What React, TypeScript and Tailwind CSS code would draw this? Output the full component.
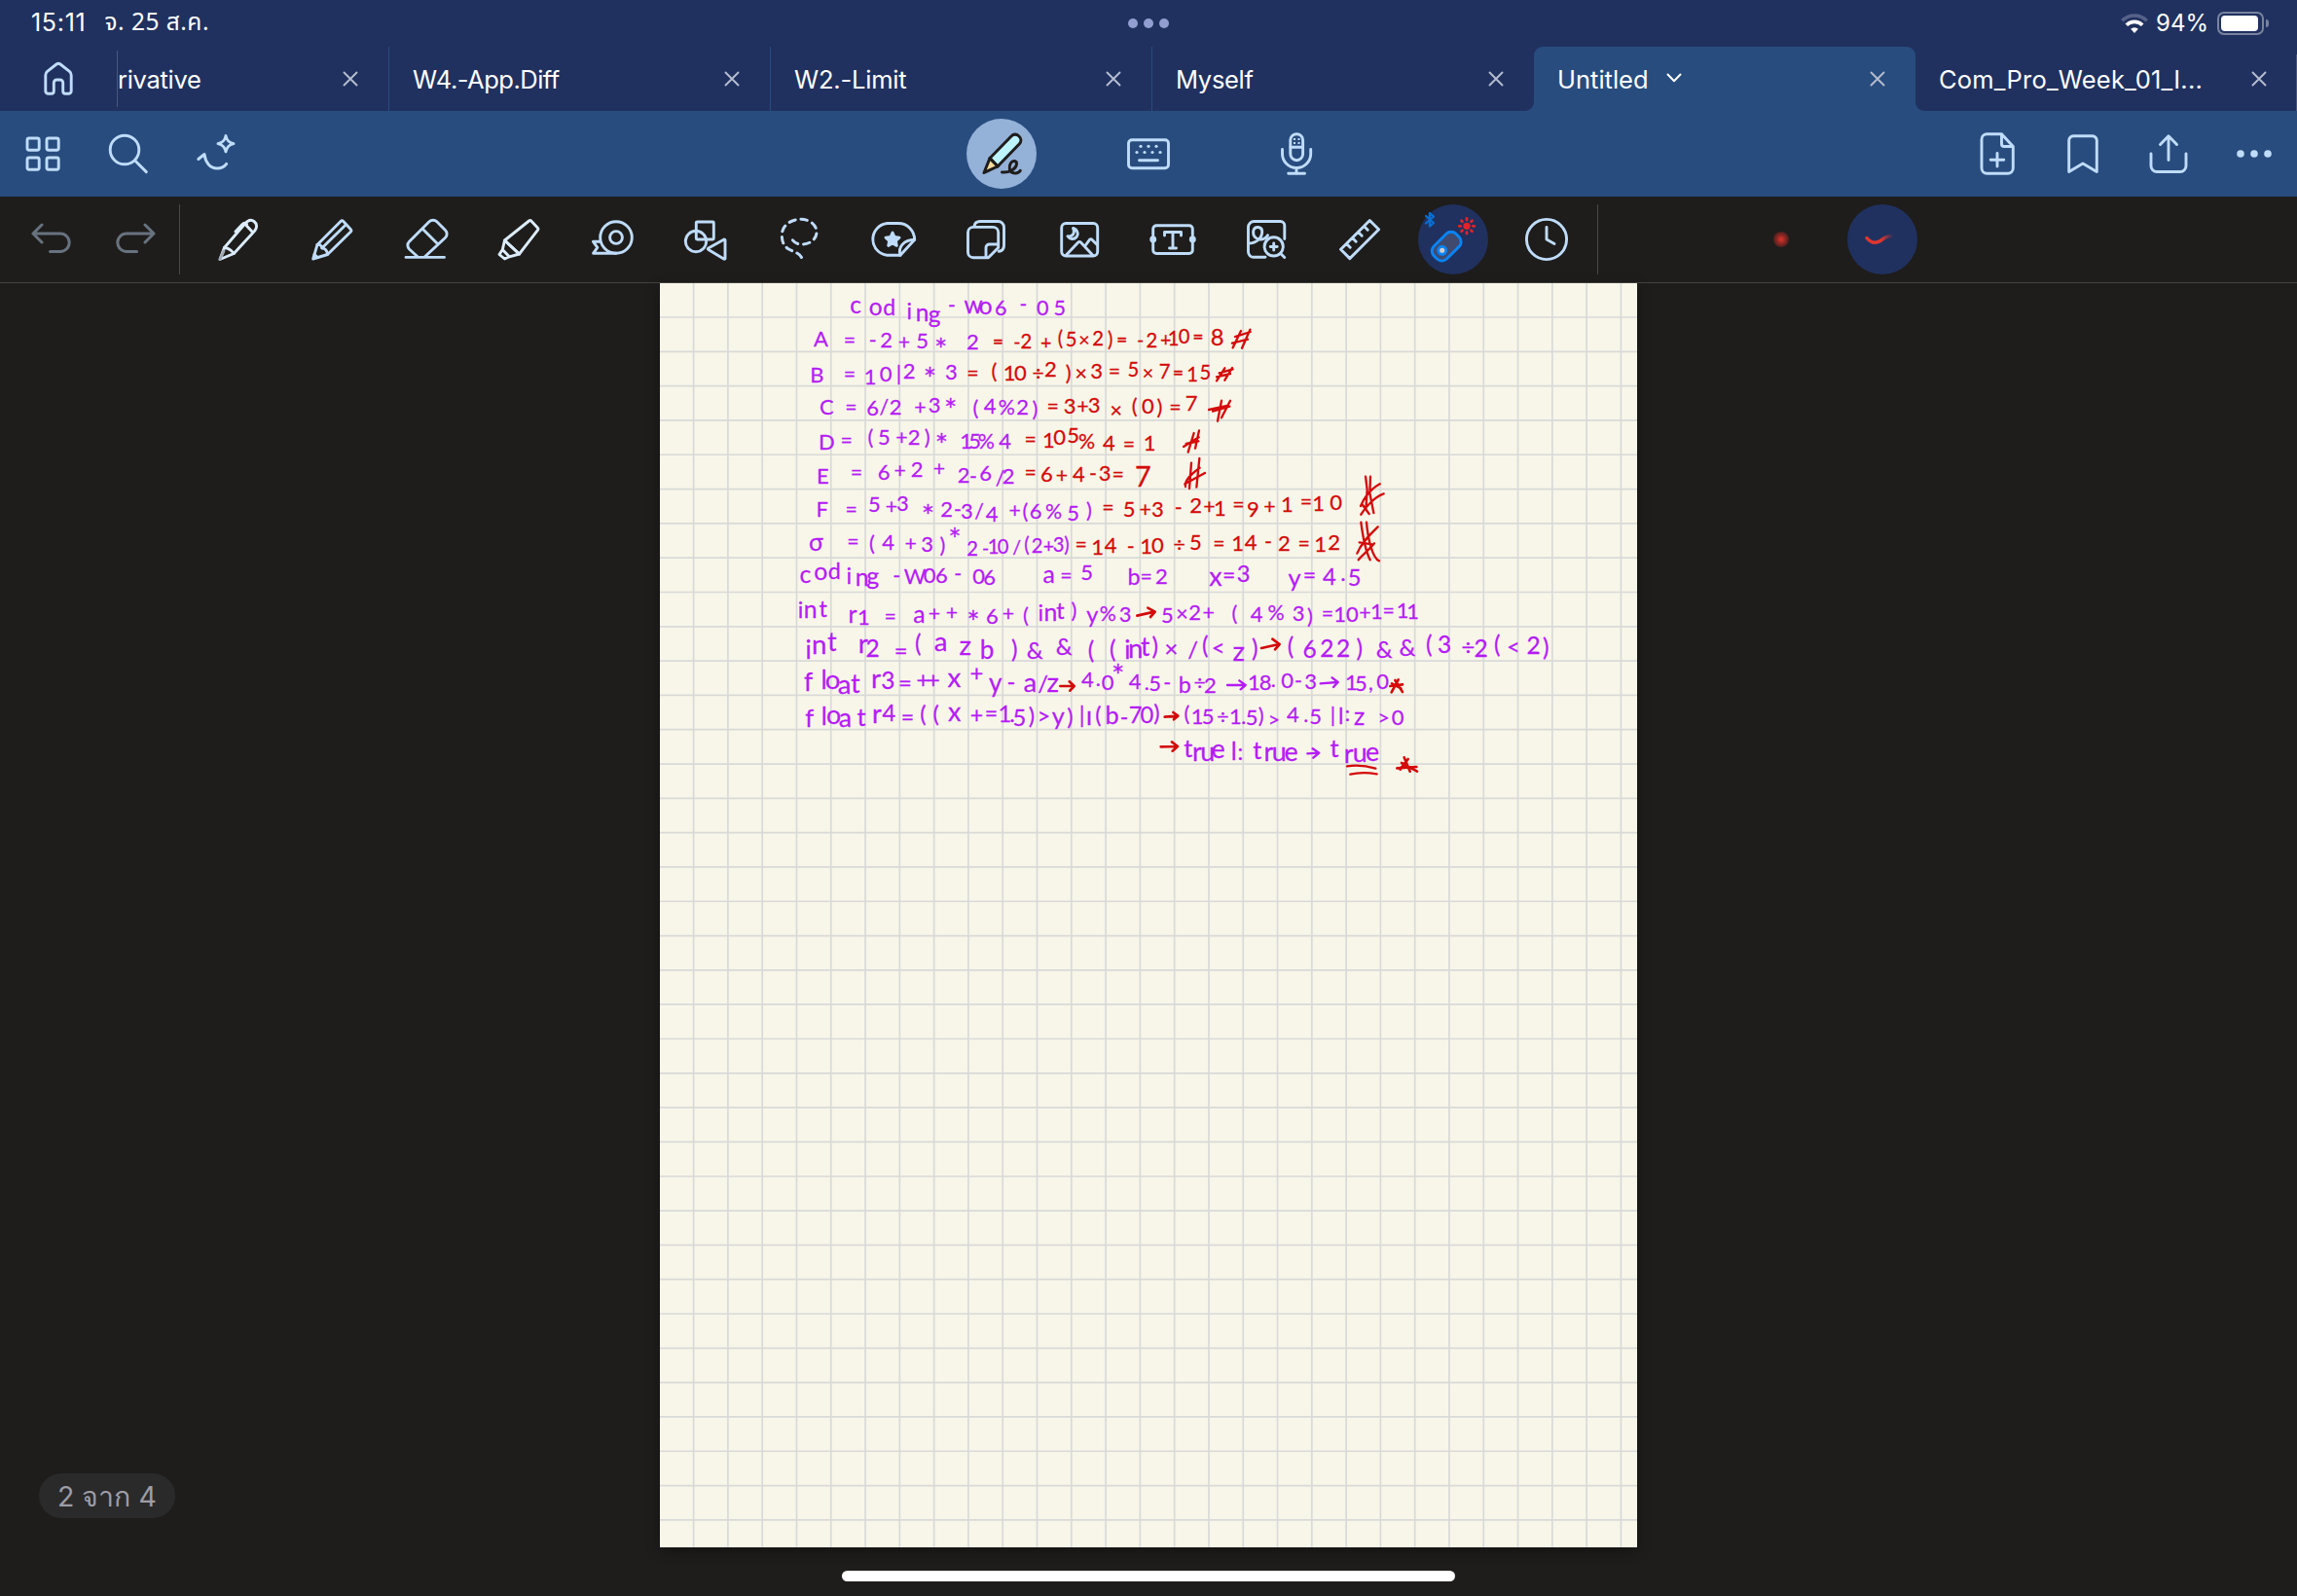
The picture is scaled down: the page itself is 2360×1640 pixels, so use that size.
import React from 'react';

const PURPLE = '#b51cf5';
const RED = '#d40a0a';

/* ---------- icons ---------- */

function Icon({
  children,
  color = '#bfdcfa',
  width = 2.9,
  className = '',
}: {
  children: React.ReactNode;
  color?: string;
  width?: number;
  className?: string;
}) {
  return (
    <svg
      viewBox="0 0 48 48"
      className={`size-12 shrink-0 overflow-visible ${className}`}
      fill="none"
      stroke={color}
      strokeWidth={width}
      strokeLinecap="round"
      strokeLinejoin="round"
    >
      {children}
    </svg>
  );
}

const GridIcon = () => (
  <Icon>
    <rect x="8" y="8" width="12.2" height="12.2" rx="2" />
    <rect x="28" y="8" width="12.2" height="12.2" rx="2" />
    <rect x="8" y="28" width="12.2" height="12.2" rx="2" />
    <rect x="28" y="28" width="12.2" height="12.2" rx="2" />
  </Icon>
);
const SearchIcon = () => (
  <Icon>
    <circle cx="20" cy="20" r="14.8" />
    <path d="M30.7 31 42.3 42.6" />
  </Icon>
);
const SparkleIcon = () => (
  <Icon>
    <path d="M36 5.5c1 5 3 7 8 8.2-5 1.2-7 3.2-8 8.2-1-5-3-7-8-8.2 5-1.2 7-3.2 8-8.2z" />
    <path d="M7.800 29.500 14 24.500c1 8 5.500 14.500 13 14.500 4 0 7.500-1.700 9.700-4.700" />
  </Icon>
);
const WriteIcon = () => (
  <Icon color="#1e1d1b" width={3}>
    <path d="M12 28.500 34 6c2.500-2.500 5.500-2.300 8 0s2.500 5.500.2 8L20 37z" fill="#bdf3ff" />
    <path d="M12 28.500 6 43.500 20 37z" fill="#f5dc9a" />
    <path d="M24.500 43c7.500.8 14.500-3.500 15-8.500.3-3.500-4-4-6-1-2.500 4-1.500 9.500 3 10.300 3 .4 5.500-.3 6.800-2.500" />
  </Icon>
);
const KeyboardIcon = () => (
  <Icon>
    <rect x="3.500" y="9.700" width="41" height="29" rx="3.500" />
    <path d="M14.500 30.700h19" />
    <g fill="#bfdcfa" stroke="none">
      <circle cx="16" cy="16.300" r="1.600" />
      <circle cx="24" cy="16.300" r="1.600" />
      <circle cx="32" cy="16.300" r="1.600" />
      <circle cx="12" cy="22.500" r="1.600" />
      <circle cx="20" cy="22.500" r="1.600" />
      <circle cx="28" cy="22.500" r="1.600" />
      <circle cx="36" cy="22.500" r="1.600" />
    </g>
  </Icon>
);
const MicIcon = () => (
  <Icon>
    <rect x="17.800" y="3.700" width="12.800" height="27" rx="6.400" />
    <path d="M18 17.300h12.500" />
    <path d="M9.500 19.500V24a14.600 14.600 0 0 0 29.200 0v-4.500M24 38.500v6M15.700 44.300h16.800" />
    <g fill="#bfdcfa" stroke="none">
      <rect x="21" y="8" width="2" height="2" />
      <rect x="25.500" y="8" width="2" height="2" />
      <rect x="21" y="12" width="2" height="2" />
      <rect x="25.500" y="12" width="2" height="2" />
    </g>
  </Icon>
);
const NewPageIcon = () => (
  <Icon>
    <path d="M28.500 3.700H13.500a5.500 5.500 0 0 0-5.500 5.500v29.600a5.500 5.500 0 0 0 5.500 5.500h21.300a5.500 5.500 0 0 0 5.500-5.500V16.500zM28.500 3.700v10.300a2.500 2.500 0 0 0 2.500 2.500h9.300M24 23.500v13.600M17.200 30.300h13.600" />
  </Icon>
);
const BookmarkIcon = () => (
  <Icon>
    <path d="M9.700 42.500V10.300a4.500 4.500 0 0 1 4.500-4.500h19.600a4.500 4.500 0 0 1 4.500 4.500v32.200L24 34z" />
  </Icon>
);
const ShareIcon = () => (
  <Icon>
    <path d="M6 24v12.500a6 6 0 0 0 6 6h24a6 6 0 0 0 6-6V24M24 30.500V6M15.500 14.500 24 5.800l8.500 8.700" />
  </Icon>
);
const MoreIcon = () => (
  <Icon color="none">
    <g fill="#bfdcfa">
      <circle cx="10" cy="24" r="3.800" />
      <circle cx="24" cy="24" r="3.800" />
      <circle cx="38" cy="24" r="3.800" />
    </g>
  </Icon>
);
const HomeIcon = () => (
  <Icon className="-m-0.5">
    <path d="M10.800 36.500V20.200c0-1.500.6-2.800 1.800-3.800L22 9c1.300-1 2.700-1 4 0l9.400 7.400c1.200 1 1.800 2.300 1.800 3.800v16.300a2.800 2.800 0 0 1-2.800 2.800h-3.200a2.500 2.500 0 0 1-2.500-2.500v-8.800a3 3 0 0 0-3-3h-3.400a3 3 0 0 0-3 3v8.800a2.500 2.500 0 0 1-2.500 2.500h-3.200a2.800 2.800 0 0 1-2.800-2.800z" />
  </Icon>
);
const UndoIcon = () => (
  <Icon color="#68727f" width={3}>
    <path d="M6 18h28a9.200 9.200 0 0 1 0 18.400H23.500M15 9 6 18l9 9" />
  </Icon>
);
const RedoIcon = () => (
  <Icon color="#68727f" width={3}>
    <path d="M42 18H14a9.200 9.200 0 0 0 0 18.400h10.500M33 9l9 9-9 9" />
  </Icon>
);
const PenIcon = () => (
  <Icon color="#dcecfc">
    <path d="M9.500 32.500 31 7.500c3-3.400 6-4.300 9-2s3.500 6 .8 9.500L19.300 38.500 5 44.500z" />
    <path d="M9.500 32.500c4 .5 7.800 3 9.800 6M31 8.500l7.500 8M21 16l7-7.500c1.500-1.600 3-1.500 4.500-.2" />
    <path d="m5 44.500 4-8.500" stroke="#9fa8b3" />
  </Icon>
);
const PencilIcon = () => (
  <Icon>
    <path d="M9 29.500 33 5.500a2 2 0 0 1 2.800 0l7.400 8a2 2 0 0 1 0 2.800L19.500 39.500 4.700 44z" />
    <path d="M9 29.500c1.500-.8 4.500.5 4.700 3.500 3 0 5.800 2.500 5.800 6.500M13.700 33l24-23.500M9.500 42.500 6 39.500" />
  </Icon>
);
const EraserIcon = () => (
  <Icon>
    <path d="M4 42.400h39.500M16 41.800 7.500 34a5.500 5.500 0 0 1 0-7.800L28 5.800a5.500 5.500 0 0 1 7.800 0l8.700 8.700a5.500 5.500 0 0 1 0 7.800L23.500 41.800M21.500 13.500 37 29" />
  </Icon>
);
const HighlighterIcon = () => (
  <Icon color="#dcecfc">
    <path d="M9.500 25 34.500 5a1.800 1.800 0 0 1 2.500.2l6.300 6.800a1.800 1.800 0 0 1 .2 2.300L24.500 39z" />
    <path d="M9.500 25 7.300 34.500l7 7.300L24.500 39zM7.300 34.500 4 39.500l5.500 4.500 4.800-2.200" />
  </Icon>
);
const TapeIcon = () => (
  <Icon>
    <circle cx="28" cy="22" r="16.300" />
    <circle cx="28" cy="22" r="6.400" />
    <path d="M28 38.300H4.500l4.300-6-4.300-6H11.500" />
  </Icon>
);
const ShapesIcon = () => (
  <Icon>
    <rect x="14.300" y="6" width="18" height="18" rx="1" />
    <circle cx="14" cy="26" r="10.700" />
    <path d="M26.800 33 43 24a.8.8 0 0 1 1 .7v18.800a.8.8 0 0 1-1 .7L26.800 34.500a.8.8 0 0 1 0-1.500z" />
  </Icon>
);
const LassoIcon = () => (
  <Icon width={3}>
    <path
      d="M17.500 24.800C20 28 23 29 27 29c8 0 15-5 15-12.500S35 3.300 25.500 3.300 6.300 9.500 6.300 19.500C6.300 26 8 30 12.500 33.500c5.500 3.300 13.500 4.500 14.800 11.300"
      strokeDasharray="6.500 5.700"
    />
  </Icon>
);
const StickerIcon = () => (
  <Icon>
    <path d="M32 40.300H18.500A16.500 16.500 0 0 1 18.500 7.500h11.500c9.500 0 16.500 7.500 16.700 16.800z" />
    <path d="M32 40.300c-2.500-8 3-15.800 14.700-16" />
    <path d="m24 17 2.100 4.500 4.900.6-3.600 3.400.9 4.900-4.300-2.400-4.300 2.400.9-4.900-3.600-3.400 4.900-.6z" fill="#bfdcfa" />
  </Icon>
);
const PagesIcon = () => (
  <Icon>
    <path d="M26.500 42.700h-15.500a5.500 5.500 0 0 1-5.500-5.500v-20.300a5.500 5.500 0 0 1 5.500-5.500h20.200a5.500 5.500 0 0 1 5.500 5.500v15.500z" />
    <path d="M24 42.500V32.500a3.500 3.500 0 0 1 3.500-3.500h9" />
    <path d="M12 10.500c.5-3.500 2.500-5 6-5h18.500a6 6 0 0 1 6 6v18.500c0 4-1.500 6-5.300 6.300" />
  </Icon>
);
const ImageIcon = () => (
  <Icon>
    <rect x="5.700" y="7.500" width="37" height="33.500" rx="4.500" />
    <path d="M17.500 12.500c4.500 1.500 6 6 3.500 9s-7 2.500-9-.7c5 .7 7.800-3 5.500-8.300zM10.500 40 22.800 27a1.800 1.800 0 0 1 2.600 0L37.500 40M30 30.500l4.600-6.300a1.500 1.500 0 0 1 2.300 0l5.300 5.300" />
  </Icon>
);
const TextBoxIcon = () => (
  <Icon>
    <rect x="3.700" y="9.700" width="40.600" height="28.800" rx="3.500" />
    <path d="M15.500 20v-3.500h17V20M24 16.500v16.500M20.500 33h7" />
    <circle cx="3.700" cy="24" r="2" fill="#bfdcfa" />
    <circle cx="44.300" cy="24" r="2" fill="#bfdcfa" />
  </Icon>
);
const SketchZoomIcon = () => (
  <Icon>
    <path d="M42.800 23.500V9.800a4.300 4.300 0 0 0-4.300-4.300H11.500a6 6 0 0 0-6 6v25.300a5.500 5.500 0 0 0 5.500 5.500h12" />
    <path d="M5.500 28c9 0 14.500-6 14.200-12.500-.3-5-8-5.500-9 0-.8 5.500 3.500 9 8 8.500 3.500-.3 5.500-2 6.800-4.300" />
    <circle cx="31.700" cy="31.400" r="9.600" />
    <path d="m38.700 38.500 4 4M31.700 28v7M28.200 31.500h7" />
  </Icon>
);
const RulerIcon = () => (
  <Icon>
    <path d="M34.300 4.500 43.600 13.800 13.800 43.600 4.500 34.300zM10.500 28.500l3.700 3.700M16.500 22.500l3.700 3.700M22.500 16.500l3.700 3.700M28.500 10.500l3.700 3.700" />
  </Icon>
);
const LaserIcon = () => (
  <Icon>
    <g transform="rotate(-45 17 31)">
      <rect x="1" y="22" width="32" height="18.500" rx="7" fill="#3f4a6e" stroke="#0a84f5" />
    </g>
    <circle cx="12.700" cy="35.300" r="4" fill="#d0cfcf" stroke="#0a84f5" />
    <path d="M-4 0 4 7 0 10.500V-3L4 .5-4 7.500" stroke="#0b6fd0" strokeWidth="2.300" />
    <circle cx="38" cy="10.300" r="3.600" fill="#e0242a" stroke="none" />
    <g stroke="#e0242a" strokeWidth="2.800">
      <path d="M38 2.500v1.500M38 16.600v1.500M30.200 10.300h1.500M44.300 10.300h1.500M32.500 4.800l1 1M42.500 14.800l1 1M43.500 4.800l-1 1M33.500 14.800l-1 1" />
    </g>
  </Icon>
);
const ClockIcon = () => (
  <Icon>
    <circle cx="24" cy="24" r="20.600" />
    <path d="M24 11.500V24l8 4.500" />
  </Icon>
);
const CloseIcon = () => (
  <svg viewBox="0 0 16 16" className="size-4 shrink-0" stroke="#b5bdd0" strokeWidth="1.900" strokeLinecap="round">
    <path d="M1.500 1.500 14.500 14.500M14.500 1.500 1.500 14.500" />
  </svg>
);

/* ---------- tabs ---------- */

function Tab({ title, last = false, spacing = 'tracking-[-0.3px]' }: { title: string; last?: boolean; spacing?: string }) {
  return (
    <div
      className={`flex h-[66px] w-[392px] shrink-0 items-center justify-between pr-[31px] pl-6 ${
        last ? '' : 'border-r-[1.500px] border-[#284c7e]'
      }`}
    >
      <span className={`pt-0.5 text-[25.500px] whitespace-nowrap ${spacing}`}>{title}</span>
      <CloseIcon />
    </div>
  );
}

/* ---------- handwriting ---------- */

type Seg = { g: 'a' | 'b' | 'c' | 'd'; c?: string; s?: number; w: string };

// Ink blocks: each has its own origin on the page, in thirds of a pixel.
const ORIGIN = { a: [366, -3], b: [1416, -3], c: [366, 717], d: [1506, 717] } as const;

// w lists "glyph x y" triples, x being the glyph's centre and y its baseline.
const INK: Seg[] = [
  { g: 'a', s: 60, w: 'c 237 97 o 299 102 d 341 101 i 403 115 n 443 120 g 480 125 - 534 92 w 600 97 o 638 98 6 685 102 - 754 90 0 814 102 5 866 102' },
  { g: 'a', w: 'A 130 197 = 219 200 - 290 200 2 332 202 + 387 207 5 443 205 * 500 218 2 598 207' },
  { g: 'a', c: RED, s: 56, w: '= 676 204 - 735 205 2 763 205 + 824 207 ( 868 195 5 902 198 × 942 197 2 984 195 ) 1022 198 = 1058 199' },
  { g: 'b', c: RED, s: 56, w: '- 65 198 2 100 200 + 143 197 1 167 196 0 200 190 = 243 188' },
  { g: 'b', c: RED, s: 66, w: '8 302 195' },
  { g: 'a', w: 'B 118 308 = 219 306 1 282 315 0 330 305 | 370 303 2 402 298 * 466 308 3 532 300' },
  { g: 'a', c: RED, w: '= 598 304 ( 664 297 1 711 303 0 745 303 ÷ 800 303 2 838 292 ) 893 303 × 932 303 3 980 297 = 1035 297' },
  { g: 'b', c: RED, s: 56, w: '5 43 290 × 88 300 7 140 297 = 181 299 1 225 305 5 265 300' },
  { g: 'a', w: 'C 148 407 = 223 408 6 290 412 / 325 408 2 360 408 + 436 407 3 480 402 * 530 405 ( 607 411 4 651 405 % 703 408 2 752 408 ) 790 414' },
  { g: 'a', c: RED, w: '= 845 404 3 897 405 + 937 406 3 972 402 × 1040 418 ( 1097 406 0 1138 405' },
  { g: 'b', c: RED, w: ') 124 407 = 172 408 7 222 397' },
  { g: 'a', w: 'D 148 517 = 209 509 ( 283 502 5 325 500 + 379 500 2 417 500 ) 458 500 * 502 512 1 578 512 5 605 513 % 640 512 4 698 512' },
  { g: 'a', c: RED, w: '= 776 507 1 832 510 0 866 502 5 908 496 % 950 514 4 1018 520 = 1080 522 1 1143 520' },
  { g: 'a', w: 'E 136 622 = 240 609 6 324 608 + 374 602 2 426 600 + 495 598 2 570 618 - 600 620 6 638 612 / 683 627 2 708 622' },
  { g: 'a', c: RED, w: '= 776 610 6 826 614 + 873 618 4 925 615 - 969 612 3 1005 612 = 1046 616' },
  { g: 'a', c: RED, s: 80, w: '7 1123 630' },
  { g: 'a', w: 'F 134 722 = 224 722 5 295 708 + 348 715 3 382 706 * 460 732 2 518 724 - 552 724 3 580 728 / 618 728 4 657 738 + 728 725 ( 760 728 6 792 730 % 848 730 5 908 735 ) 957 726' },
  { g: 'a', c: RED, w: '= 1015 718 5 1080 724 + 1130 724 3 1168 724' },
  { g: 'b', c: RED, w: '- 182 718 2 236 712 + 277 714 1 310 720 = 367 707 9 412 724 + 463 714 1 517 708 = 576 698 1 614 706 0 668 702' },
  { g: 'c', w: 'σ 115 108 = 229 101 ( 288 108 4 338 104 + 407 107 3 458 110 ) 505 113 * 543 82' },
  { g: 'c', s: 56, w: '2 597 122 - 638 120 1 662 118 0 692 118 / 734 118 ( 765 112 2 797 113 + 832 115 3 863 112 ) 888 110' },
  { g: 'c', c: RED, w: '= 932 112 1 983 121 4 1023 113 - 1085 116 1 1133 116 0 1168 115' },
  { g: 'd', c: RED, w: '÷ 95 112 5 145 106 = 217 109 1 275 108 4 315 105 - 369 103 2 418 107 = 479 108 1 530 110 2 572 105' },
  { g: 'c', w: 'c 82 207 o 130 199 d 172 195 i 217 209 n 257 215 g 290 212 - 364 207 W 420 211 0 465 208 6 502 208 - 553 202 0 617 211 6 650 214' },
  { g: 'c', w: 'a 833 208 = 886 207 5 950 198 b 1095 213 = 1133 211 2 1180 211' },
  { g: 'd', s: 66, w: 'x 207 216 = 248 206 3 293 204 y 450 220 = 496 207 4 558 213 . 600 202 5 635 217' },
  { g: 'c', w: 'i 68 314 n 98 315 t 137 312 r 228 330 1 262 336 = 344 334 a 433 330 + 480 325 + 534 320 * 600 337 6 658 332 + 708 324 ( 762 330 i 808 325 n 838 324 t 868 318 ) 910 315 y 967 330 % 1015 324 3 1068 326' },
  { g: 'd', w: '5 58 330 × 103 324 2 143 320 + 185 322 ( 265 325 4 333 327 % 393 320 3 462 325 ) 498 334 = 552 324 1 590 326 0 628 327 + 667 320 1 703 318 = 740 316 1 783 314 1 815 318' },
  { g: 'c', s: 68, w: 'i 92 440 n 125 425 t 165 417 r 260 422 2 290 434 = 377 440 ( 430 420 a 500 418 z 575 430 b 642 442 ) 727 438 & 790 440 & 880 430 ( 963 440 ( 1030 438 i 1075 440 n 1100 438 t 1130 432 ) 1160 430' },
  { g: 'd', s: 68, w: '× 70 435 / 137 438 ( 175 425 < 215 432 z 278 446 ) 328 436 ( 438 430 6 497 437 2 550 435 2 600 434 ) 650 434 & 727 437 & 798 432 ( 865 424 3 912 422 ÷ 985 430 2 1025 434 ( 1075 424 < 1125 430 2 1187 427 ) 1225 432' },
  { g: 'c', s: 68, w: 'f 92 541 l 140 535 o 167 535 a 203 548 t 237 545 r 300 532 3 337 533 = 390 540 + 445 530 + 477 530 x 541 528 + 610 510 y 668 542 - 717 538 a 775 542 / 815 542 z 845 542' },
  { g: 'c', w: '4 952 528 . 985 526 0 1014 537 * 1046 502 4 1098 535 . 1135 536 5 1160 541' },
  { g: 'd', w: '- 58 538 b 112 546 ÷ 158 538 2 190 546 1 325 537 8 360 537 . 385 527 0 428 530 - 462 532 3 500 535 1 625 537 5 655 541 , 685 538 0 722 535' },
  { g: 'c', s: 66, w: 'f 95 650 l 140 645 o 170 642 a 205 652 t 255 648 r 303 638 4 340 634 = 397 646 ( 445 636 ( 485 636 x 542 632 + 610 640 = 655 634 1 697 635 . 720 636 5 742 648 ) 780 643 > 817 642 y 862 645 ) 898 645 | 935 638 ı 957 645 ( 985 638 b 1028 642 - 1065 645 7 1100 638 0 1135 638 ) 1165 632' },
  { g: 'd', w: '( 118 632 1 150 643 5 183 642 ÷ 229 642 1 268 643 . 293 642 5 318 646 ) 347 640 > 387 650 4 445 635 . 485 636 5 515 642 | 568 635 l 593 643 : 613 634 z 650 646 > 725 644 0 768 644' },
  { g: 'd', s: 66, w: 't 122 745 r 150 757 u 182 757 e 215 748 l 263 752 : 283 752 t 335 750 r 370 755 u 403 755 e 440 755 t 573 745 r 617 762 u 652 760 e 690 755' },
];

// Handwriting proportions: small letters and asterisks run large next to the digits.
function glyphScale(ch: string) {
  if (ch === '*') return 1.55;
  if (/[acemnorsuvwxzσıg]/.test(ch)) return 1.22;
  if (/[tfbdliy]/.test(ch)) return 1.15;
  if (/[0-9A-Z()]/.test(ch)) return 1.08;
  return 1.05;
}

function Ink() {
  return (
    <svg
      viewBox="0 0 3012 3897"
      className="absolute inset-0 h-full w-full"
      fontFamily="Lato, 'Open Sans', sans-serif"
      textAnchor="middle"
    >
      {INK.map((seg, i) => {
        const parts = seg.w.split(' ');
        const color = seg.c ?? PURPLE;
        const [ox, oy] = ORIGIN[seg.g];
        const glyphs: React.ReactNode[] = [];
        for (let k = 0; k < parts.length; k += 3) {
          const ch = parts[k];
          const x = Number(parts[k + 1]) + ox;
          const y = Number(parts[k + 2]) + oy + (ch === '*' ? 22 : 0);
          const next = Number(parts[k + 4]) + ox;
          glyphs.push(
            <tspan key={k} x={x} y={y} fontSize={(seg.s ?? 61) * glyphScale(ch)}>
              {ch}
            </tspan>,
          );
          if (next - x > 52) {
            glyphs.push(
              <tspan key={`${k}s`} x={(x + next) / 2} y={y}>
                {' '}
              </tspan>,
            );
          }
        }
        return (
          <text key={i} fill={color} stroke={color} strokeWidth={0.8} strokeLinejoin="round" fontSize={seg.s ?? 61}>
            {glyphs}
          </text>
        );
      })}
      <g fill="none" stroke={RED} strokeWidth="8" strokeLinecap="round" strokeLinejoin="round">
        {/* closing marks */}
        <g transform="translate(1416 -3)" strokeWidth="7">
          <path d="M350 202 375 150M378 203 403 146M357 168 404 153M348 188 396 176" />
          <path d="M300 304 325 265M325 302 348 264M308 280 350 268M300 292 342 282" />
          <path d="M303 428 315 365M315 418 342 365M276 393 336 380M288 398 340 383" />
          <path d="M212 524 230 465M234 512 246 457M198 507 245 478M206 498 244 490" />
          <path d="M216 636 222 557M238 632 247 543M202 622 264 588M204 630 C200 610 224 590 248 572" />
          <path d="M759 599 764 640 760 700M774 599 772 650 784 711M745 716 C760 690 790 660 815 652M744 690 C756 660 780 635 803 622M748 684 770 714" />
        </g>
        <g transform="translate(1506 717)">
          <path
            d="M655 20 C660 60 670 110 683 136M672 20 C676 70 690 130 711 139M643 116 C655 85 680 60 707 34M647 136 C660 120 680 105 696 85M650 82 690 88"
            strokeWidth="7"
          />
          <path d="M348 408 402 396M382 380 404 396 390 412" />
          <path d="M-35 308 18 296M-2 284 20 296 6 312" />
          <path d="M745 525 783 520M760 507 783 543M770 505 749 544M750 517 778 532" />
          <path d="M50 620 90 617M76 606 91 617 78 628" />
          <path d="M38 712 90 711M72 697 90 711 74 725" />
          <path d="M612 772C640 768 670 770 700 779M622 797C650 790 680 792 704 796" strokeWidth="7" />
          <path d="M766 778 826 774M788 745 806 788M800 750 776 782M780 762 828 788" />
        </g>
        <path d="M1234 1242h42M1262 1228l15 14-13 14" />
      </g>
      <g
        transform="translate(1506 717)"
        fill="none"
        stroke={PURPLE}
        strokeWidth="7"
        strokeLinecap="round"
        strokeLinejoin="round"
      >
        <path d="M243 522 298 522M280 508 299 522 284 535M530 517 583 513M566 499 584 513 570 528M490 733 525 731M506 718 526 731 508 746" />
      </g>
    </svg>
  );
}

const V_LINES = Array.from({ length: 28 }, (_, i) => 34.6 + i * 35.29);
const H_LINES = Array.from({ length: 36 }, (_, i) => 35 + i * 35.31);

function Paper() {
  return (
    <div className="relative h-[1299px] w-[1004px] bg-[#f8f6e9] shadow-[0_4px_12px_rgba(0,0,0,0.35)]">
      <svg viewBox="0 0 1004 1299" className="absolute inset-0 h-full w-full" stroke="#d9dad8" strokeWidth="1.700">
        {V_LINES.map((x) => (
          <line key={x} x1={x} x2={x} y1="0" y2="1299" />
        ))}
        {H_LINES.map((y) => (
          <line key={y} x1="0" x2="1004" y1={y} y2={y} />
        ))}
      </svg>
      <Ink />
    </div>
  );
}

const TOOLS = [
  PenIcon,
  PencilIcon,
  EraserIcon,
  HighlighterIcon,
  TapeIcon,
  ShapesIcon,
  LassoIcon,
  StickerIcon,
  PagesIcon,
  ImageIcon,
  TextBoxIcon,
  SketchZoomIcon,
  RulerIcon,
  LaserIcon,
  ClockIcon,
];

export default function App() {
  return (
    <div className="flex h-[1640px] w-[2360px] flex-col overflow-hidden bg-[#1e1d1b] font-[Inter,'Noto_Sans',sans-serif] text-white">
      {/* status bar */}
      <div className="grid h-12 shrink-0 grid-cols-3 items-center bg-[#20315f] text-[24px]">
        <div className="flex items-center gap-[19px] pl-8">
          <span className="text-[25px] tracking-[0.7px]">15:11</span>
          <span className="font-['Noto_Sans_Thai',Inter,sans-serif] text-[24.500px] tracking-[0.500px] whitespace-nowrap">จ. 25 ส.ค.</span>
        </div>
        <div className="flex justify-center gap-1.5">
          <span className="size-2.5 rounded-full bg-[#909fd0]" />
          <span className="size-2.5 rounded-full bg-[#909fd0]" />
          <span className="size-2.5 rounded-full bg-[#909fd0]" />
        </div>
        <div className="flex items-center justify-end pr-[29px]">
          <svg viewBox="0 0 28 20" className="mr-2 h-5 w-7" fill="none" strokeWidth="3.600">
            <path d="M1.300 7.300a18 18 0 0 1 25.400 0" stroke="#56628a" />
            <path d="M5.800 11.800a11.600 11.600 0 0 1 16.400 0" stroke="#fff" />
            <path d="M14 20l-3.900-4.200a5.500 5.500 0 0 1 7.800 0z" fill="#fff" />
          </svg>
          <span className="mr-[9px]">94%</span>
          <div className="flex h-6 w-12 items-center rounded-[7px] border-2 border-[#79839f] p-[2px]">
            <div className="h-4 w-[38px] rounded-[4px] bg-white" />
          </div>
          <div className="ml-[2px] h-2 w-[3px] rounded-r-full bg-[#79839f]" />
        </div>
      </div>

      {/* tab bar */}
      <div className="flex h-[66px] shrink-0 bg-[#20315f]">
        <div className="flex w-[121px] shrink-0 items-center justify-between pl-[38px]">
          <HomeIcon />
          <div className="h-[58px] w-px bg-[#4a5880]" />
        </div>
        <div className="flex h-[66px] w-[279px] shrink-0 items-center justify-between border-r-[1.500px] border-[#284c7e] pr-[31px]">
          <span className="pt-0.5 text-[25.500px] tracking-[-0.3px]">rivative</span>
          <CloseIcon />
        </div>
        <Tab title="W4.-App.Diff" spacing="tracking-[-0.5px]" />
        <Tab title="W2.-Limit" spacing="tracking-[-0.2px]" />
        <div className="w-[392px] shrink-0 bg-[#284c7e]">
          <div className="rounded-br-[9px] bg-[#20315f]">
            <Tab title="Myself" last />
          </div>
        </div>
        <div className="w-[392px] shrink-0 bg-[#20315f]">
          <div className="flex h-[66px] items-center rounded-t-[9px] bg-[#284c7e] pr-[31px] pl-6">
            <span className="pt-0.5 text-[25.500px] tracking-[0px]">Untitled</span>
            <svg viewBox="0 0 16 10" className="mt-[-2px] ml-[18px] h-2.5 w-4" fill="none" stroke="#fff" strokeWidth="2" strokeLinecap="round" strokeLinejoin="round">
              <path d="M1.500 1.500 8 8.200l6.500-6.700" />
            </svg>
            <div className="ml-auto">
              <CloseIcon />
            </div>
          </div>
        </div>
        <div className="w-[391px] shrink-0 bg-[#284c7e]">
          <div className="rounded-bl-[9px] bg-[#20315f]">
            <Tab title="Com_Pro_Week_01_I..." last spacing="tracking-[0.2px]" />
          </div>
        </div>
        <div className="mt-2 h-[58px] w-px bg-[#4a5880]" />
      </div>

      {/* document bar */}
      <div className="grid h-[88px] shrink-0 grid-cols-3 items-center bg-[#284c7e]">
        <div className="flex items-center gap-10 pl-5">
          <GridIcon />
          <SearchIcon />
          <SparkleIcon />
        </div>
        <div className="flex items-center justify-center gap-[91px]">
          <div className="grid size-[72px] place-items-center rounded-full bg-[#94b1d8]">
            <WriteIcon />
          </div>
          <KeyboardIcon />
          <div className="grid w-[72px] justify-start pl-[13px]">
            <MicIcon />
          </div>
        </div>
        <div className="flex items-center justify-end gap-10 pr-5">
          <NewPageIcon />
          <BookmarkIcon />
          <ShareIcon />
          <MoreIcon />
        </div>
      </div>

      {/* tool bar */}
      <div className="flex h-[89px] shrink-0 items-center border-b border-[#454340]">
        <div className="flex w-[184px] items-center gap-10 pl-7">
          <UndoIcon />
          <RedoIcon />
        </div>
        <div className="h-[72px] w-px bg-[#4a4948]" />
        <div className="ml-3 flex">
          {TOOLS.map((Tool, i) => (
            <div key={i} className="grid h-[72px] w-24 place-items-center">
              <div className={`grid size-[72px] place-items-center rounded-full ${i === 13 ? 'bg-[#20315f]' : ''}`}>
                <Tool />
              </div>
            </div>
          ))}
        </div>
        <div className="ml-1 h-[72px] w-px bg-[#4a4948]" />
        <div className="ml-[180px] size-4 rounded-full bg-[radial-gradient(circle,#d8302a_5%,#8a2723_40%,#3a1d1b_80%,#1e1d1b_100%)]" />
        <div className="ml-[60px] grid size-[72px] place-items-center rounded-full bg-[#20315f]">
          <svg viewBox="0 0 30 12" className="-ml-1.5 h-3 w-[30px]" fill="none" strokeWidth="3.400" strokeLinecap="round">
            <defs>
              <linearGradient id="trail" x1="0" x2="1" y1="0" y2="0">
                <stop offset="0.6" stopColor="#e0362f" />
                <stop offset="1" stopColor="#e0362f" stopOpacity="0.150" />
              </linearGradient>
            </defs>
            <path d="M2 4.500C6 9.500 11 10.500 16 7.500 20 4.500 22 2.500 27 2.800" stroke="url(#trail)" />
          </svg>
        </div>
      </div>

      {/* canvas */}
      <div className="relative flex grow justify-center">
        <div className="-mr-1 pr-1">
          <Paper />
        </div>
        <div className="absolute bottom-20 left-10 flex h-[46px] w-[140px] items-center justify-center rounded-full bg-[#2b2a2b] pt-0.5 text-[28.500px] whitespace-nowrap text-[#9d9da5]">
          2 จาก 4
        </div>
        <div className="absolute bottom-[15px] left-[865px] h-[11px] w-[630px] rounded-full bg-white" />
      </div>
    </div>
  );
}
